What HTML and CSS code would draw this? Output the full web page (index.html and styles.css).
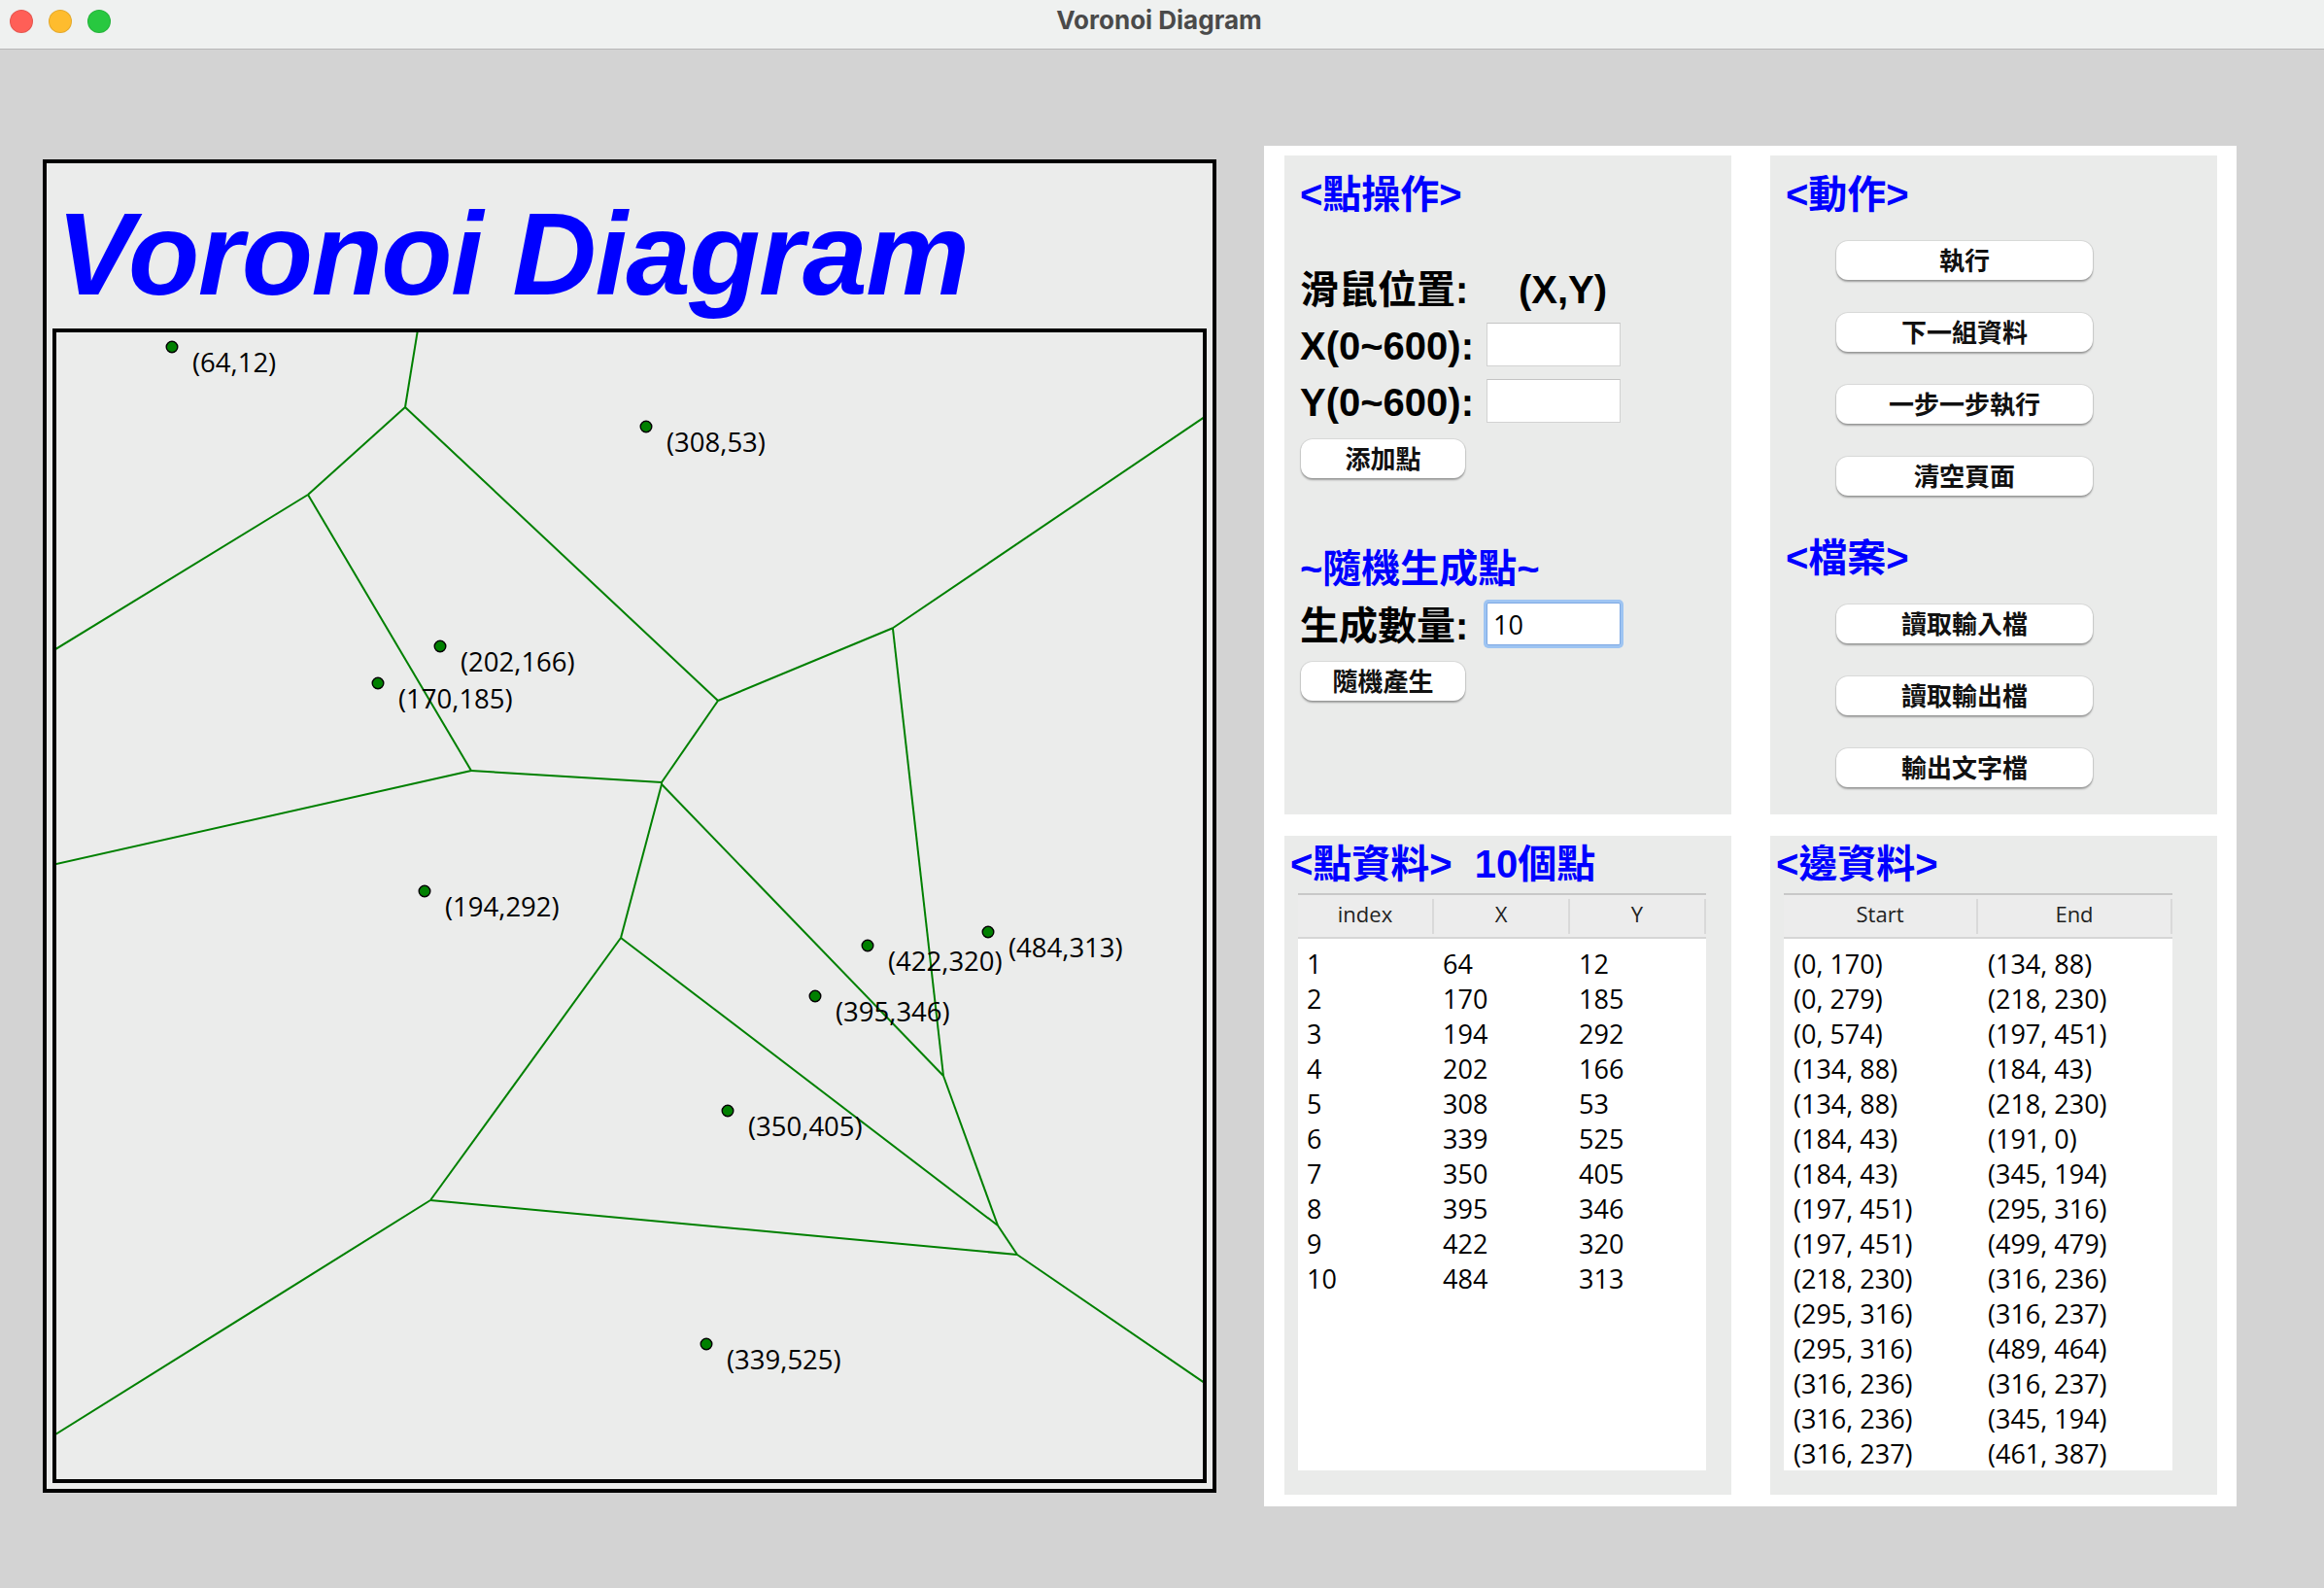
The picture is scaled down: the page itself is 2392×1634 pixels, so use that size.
FILE: index.html
```html
<!DOCTYPE html>
<html lang="zh-Hant">
<head>
<meta charset="utf-8">
<title>Voronoi Diagram</title>
<link rel="stylesheet" href="styles.css">
</head>
<body>
<header class="titlebar">
  <div class="lights">
    <span class="light red"></span>
    <span class="light yellow"></span>
    <span class="light green"></span>
  </div>
  <div class="window-title">Voronoi Diagram</div>
  <div></div>
</header>

<main class="main">
  <section class="frame">
    <h1 class="big-title">Voronoi Diagram</h1>
    <div class="canvas">
      <svg class="plot" width="1180" height="1180" viewBox="4.5 4.5 590 590" xmlns="http://www.w3.org/2000/svg">
        <g class="edges-g" stroke="#008000" stroke-width="1" fill="none">
          <line x1="0" y1="170" x2="134" y2="88"/>
          <line x1="0" y1="279" x2="218" y2="230"/>
          <line x1="0" y1="574" x2="197" y2="451"/>
          <line x1="134" y1="88" x2="184" y2="43"/>
          <line x1="134" y1="88" x2="218" y2="230"/>
          <line x1="184" y1="43" x2="191" y2="0"/>
          <line x1="184" y1="43" x2="345" y2="194"/>
          <line x1="197" y1="451" x2="295" y2="316"/>
          <line x1="197" y1="451" x2="499" y2="479"/>
          <line x1="218" y1="230" x2="316" y2="236"/>
          <line x1="295" y1="316" x2="316" y2="237"/>
          <line x1="295" y1="316" x2="489" y2="464"/>
          <line x1="316" y1="236" x2="316" y2="237"/>
          <line x1="316" y1="236" x2="345" y2="194"/>
          <line x1="316" y1="237" x2="461" y2="387"/>
          <line x1="345" y1="194" x2="434.95" y2="156.63"/>
          <line x1="434.95" y1="156.63" x2="461" y2="387"/>
          <line x1="434.95" y1="156.63" x2="600" y2="44.9"/>
          <line x1="461" y1="387" x2="489" y2="464"/>
          <line x1="489" y1="464" x2="499" y2="479"/>
          <line x1="499" y1="479" x2="600" y2="548.1"/>
        </g>
        <g class="dots" fill="#008000" stroke="#000" stroke-width="0.7">
          <circle cx="64" cy="12" r="2.9"/>
          <circle cx="170" cy="185" r="2.9"/>
          <circle cx="194" cy="292" r="2.9"/>
          <circle cx="202" cy="166" r="2.9"/>
          <circle cx="308" cy="53" r="2.9"/>
          <circle cx="339" cy="525" r="2.9"/>
          <circle cx="350" cy="405" r="2.9"/>
          <circle cx="395" cy="346" r="2.9"/>
          <circle cx="422" cy="320" r="2.9"/>
          <circle cx="484" cy="313" r="2.9"/>
        </g>
        <g class="labels">
          <text x="74.5" y="25">(64,12)</text>
          <text x="180.5" y="198">(170,185)</text>
          <text x="204.5" y="305">(194,292)</text>
          <text x="212.5" y="179">(202,166)</text>
          <text x="318.5" y="66">(308,53)</text>
          <text x="349.5" y="538">(339,525)</text>
          <text x="360.5" y="418">(350,405)</text>
          <text x="405.5" y="359">(395,346)</text>
          <text x="432.5" y="333">(422,320)</text>
          <text x="494.5" y="326">(484,313)</text>
        </g>
      </svg>
    </div>
  </section>

  <section class="side">
    <div class="panel ops">
      <div class="heading">&lt;點操作&gt;</div>
      <div class="row row-mouse">
        <span class="label">滑鼠位置:</span>
        <span class="xy">(X,Y)</span>
      </div>
      <div class="row">
        <span class="label">X(0~600):</span>
        <input class="field" type="text" value="">
      </div>
      <div class="row">
        <span class="label">Y(0~600):</span>
        <input class="field" type="text" value="">
      </div>
      <button class="btn btn-small btn-add">添加點</button>
      <div class="heading heading-random">~隨機生成點~</div>
      <div class="row row-count">
        <span class="label">生成數量:</span>
        <input class="field field-focus" type="text" value="10">
      </div>
      <button class="btn btn-small btn-random">隨機產生</button>
    </div>

    <div class="panel actions">
      <div class="heading">&lt;動作&gt;</div>
      <button class="btn btn-wide first">執行</button>
      <button class="btn btn-wide">下一組資料</button>
      <button class="btn btn-wide">一步一步執行</button>
      <button class="btn btn-wide">清空頁面</button>
      <div class="heading heading-file">&lt;檔案&gt;</div>
      <button class="btn btn-wide first">讀取輸入檔</button>
      <button class="btn btn-wide">讀取輸出檔</button>
      <button class="btn btn-wide">輸出文字檔</button>
    </div>

    <div class="panel data points">
      <div class="heading data-heading">&lt;點資料&gt;<span class="count">10個點</span></div>
      <div class="table table-points">
        <div class="thead">
          <div class="th">index</div>
          <div class="th">X</div>
          <div class="th">Y</div>
        </div>
        <div class="tbody">
          <div class="tr"><span>1</span><span>64</span><span>12</span></div>
          <div class="tr"><span>2</span><span>170</span><span>185</span></div>
          <div class="tr"><span>3</span><span>194</span><span>292</span></div>
          <div class="tr"><span>4</span><span>202</span><span>166</span></div>
          <div class="tr"><span>5</span><span>308</span><span>53</span></div>
          <div class="tr"><span>6</span><span>339</span><span>525</span></div>
          <div class="tr"><span>7</span><span>350</span><span>405</span></div>
          <div class="tr"><span>8</span><span>395</span><span>346</span></div>
          <div class="tr"><span>9</span><span>422</span><span>320</span></div>
          <div class="tr"><span>10</span><span>484</span><span>313</span></div>
        </div>
      </div>
    </div>

    <div class="panel data edges">
      <div class="heading data-heading">&lt;邊資料&gt;</div>
      <div class="table table-edges">
        <div class="thead">
          <div class="th">Start</div>
          <div class="th">End</div>
        </div>
        <div class="tbody">
          <div class="tr"><span>(0, 170)</span><span>(134, 88)</span></div>
          <div class="tr"><span>(0, 279)</span><span>(218, 230)</span></div>
          <div class="tr"><span>(0, 574)</span><span>(197, 451)</span></div>
          <div class="tr"><span>(134, 88)</span><span>(184, 43)</span></div>
          <div class="tr"><span>(134, 88)</span><span>(218, 230)</span></div>
          <div class="tr"><span>(184, 43)</span><span>(191, 0)</span></div>
          <div class="tr"><span>(184, 43)</span><span>(345, 194)</span></div>
          <div class="tr"><span>(197, 451)</span><span>(295, 316)</span></div>
          <div class="tr"><span>(197, 451)</span><span>(499, 479)</span></div>
          <div class="tr"><span>(218, 230)</span><span>(316, 236)</span></div>
          <div class="tr"><span>(295, 316)</span><span>(316, 237)</span></div>
          <div class="tr"><span>(295, 316)</span><span>(489, 464)</span></div>
          <div class="tr"><span>(316, 236)</span><span>(316, 237)</span></div>
          <div class="tr"><span>(316, 236)</span><span>(345, 194)</span></div>
          <div class="tr"><span>(316, 237)</span><span>(461, 387)</span></div>
        </div>
      </div>
    </div>
  </section>
</main>
</body>
</html>
```

FILE: styles.css
```css
* { box-sizing: border-box; }

html, body {
  margin: 0;
  padding: 0;
}

body {
  width: 2392px;
  height: 1634px;
  overflow: hidden;
  background: #d3d3d3;
  font-family: "Liberation Sans", "Noto Sans CJK TC", sans-serif;
  color: #000;
}

/* ---------- window title bar ---------- */
.titlebar {
  height: 51px;
  background: #eff1f0;
  border-bottom: 1px solid #b8b8b8;
  display: grid;
  grid-template-columns: 1fr auto 1fr;
  align-items: start;
}

.lights {
  display: flex;
  gap: 16px;
  padding: 10px 0 0 10px;
}

.light {
  width: 24px;
  height: 24px;
  border-radius: 50%;
  border: 1px solid rgba(0, 0, 0, 0.1);
}
.light.red { background: #ff5f57; }
.light.yellow { background: #febc2e; }
.light.green { background: #28c840; }

.window-title {
  font-family: "Inter", "Liberation Sans", sans-serif;
  font-weight: 700;
  font-size: 26px;
  line-height: 30px;
  padding-top: 6px;
  color: #4a4a4a;
  margin-left: -6px;
}

/* ---------- main layout ---------- */
.main {
  display: flex;
  align-items: flex-start;
  padding-left: 44px;
}

/* ---------- left frame with canvas ---------- */
.frame {
  margin-top: 113px;
  width: 1208px;
  height: 1372px;
  border: 4px solid #000;
  background: #ebeceb;
  padding: 0 6px 6px 6px;
}

.big-title {
  margin: 0;
  height: 170px;
  padding: 26px 0 0 4px;
  font-family: "Liberation Sans", sans-serif;
  font-weight: 700;
  font-style: italic;
  font-size: 120px;
  line-height: 134px;
  letter-spacing: -1.6px;
  color: #0000ff;
  white-space: nowrap;
}

.canvas {
  width: 1188px;
  height: 1188px;
  border: 4px solid #000;
  background: #ebeceb;
  overflow: hidden;
}

.plot {
  display: block;
}

.labels text {
  font-family: "Open Sans", "Liberation Sans", sans-serif;
  font-size: 13.75px;
  fill: #000;
}

/* ---------- right side panels ---------- */
.side {
  margin-top: 99px;
  margin-left: 49px;
  width: 1001px;
  height: 1400px;
  background: #ffffff;
  padding: 10px 20px 12px 21px;
  display: grid;
  grid-template-columns: 460px 460px;
  grid-template-rows: 678px 678px;
  column-gap: 40px;
  row-gap: 22px;
}

.panel {
  background: #eaebea;
  display: flex;
  flex-direction: column;
  align-items: flex-start;
}

.heading {
  font-size: 40px;
  line-height: 40px;
  font-weight: 700;
  color: #0000ff;
  white-space: nowrap;
}

/* point operations panel */
.ops {
  padding: 20px 16px 0 16px;
}

.row {
  display: flex;
  align-items: center;
  height: 45px;
  margin-top: 13px;
}

.row-mouse {
  margin-top: 54px;
}

.label {
  width: 192px;
  font-size: 40px;
  line-height: 40px;
  font-weight: 700;
  white-space: nowrap;
  padding-top: 3px;
}

.xy {
  margin-left: 33px;
  font-size: 40px;
  line-height: 40px;
  font-weight: 700;
  padding-top: 3px;
}

.field {
  width: 138px;
  height: 45px;
  margin: 0;
  border: 1px solid #d2d2d2;
  border-top-color: #c4c4c4;
  background: #fff;
  padding: 0 6px;
  font-family: "Open Sans", "Liberation Sans", sans-serif;
  font-size: 27px;
  color: #000;
  outline: none;
}

.row-count {
  height: 44px;
  margin-top: 15px;
}

.field-focus {
  height: 44px;
  border: 1px solid #7ea9e4;
  border-radius: 2px;
  box-shadow: 0 0 0 3px #9ec4f2;
}

.btn {
  display: block;
  height: 40px;
  padding: 0 0 3px 0;
  border: none;
  border-radius: 12px;
  background: #ffffff;
  box-shadow: 0 0 0 1px rgba(0, 0, 0, 0.06), 0 1.5px 2px rgba(0, 0, 0, 0.32);
  font-family: "Noto Sans CJK TC", "Liberation Sans", sans-serif;
  font-weight: 700;
  font-size: 26px;
  line-height: 37px;
  color: #111;
  text-align: center;
}

.btn-small {
  width: 169px;
  margin-left: 1px;
}

.btn-add {
  margin-top: 17px;
}

.heading-random {
  margin-top: 73px;
}

.btn-random {
  margin-top: 17px;
}

/* actions panel */
.actions {
  padding: 20px 16px 0 16px;
}

.btn-wide {
  width: 264px;
  margin-left: 52px;
  margin-top: 34px;
}

.btn-wide.first {
  margin-top: 28px;
}

.heading-file {
  margin-top: 44px;
}

/* data panels */
.data {
  padding: 9px 14px 0 14px;
}

.data-heading {
  margin-left: -8px;
}

.count {
  margin-left: 23px;
}

.table {
  margin-top: 10px;
  background: #fff;
}

.table-points { width: 420px; }
.table-edges { width: 400px; }

.thead {
  display: grid;
  height: 47px;
  align-items: center;
  background: #ececec;
  border-top: 2px solid #c8c8c8;
  border-bottom: 2px solid #d6d6d6;
}

.table-points .thead,
.table-points .tr {
  grid-template-columns: 140px 140px 140px;
}

.table-edges .thead,
.table-edges .tr {
  grid-template-columns: 200px 200px;
}

.th {
  height: 36px;
  line-height: 31px;
  text-align: center;
  border-right: 2px solid #d9d9d9;
  font-family: "Open Sans", "Liberation Sans", sans-serif;
  font-size: 22px;
  color: #222;
}

.tbody {
  height: 547px;
  overflow: hidden;
  padding-top: 8px;
}

.tr {
  display: grid;
  height: 36px;
  line-height: 36px;
  font-family: "Open Sans", "Liberation Sans", sans-serif;
  font-size: 27px;
  color: #000;
  white-space: nowrap;
}

.tr span {
  padding-left: 9px;
}

.table-edges .tr span {
  padding-left: 10px;
}
```
